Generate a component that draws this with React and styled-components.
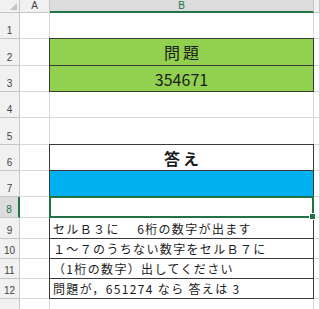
import { createGlobalStyle, styled, css } from "styled-components";

const GREEN = "#92d050";
const BLUE = "#00b0f0";
const EXCEL = "#217346";
const GRID = "#d9d9d9";
const INK = "#3a3a3a";

const GlobalStyle = createGlobalStyle`
  body {
    margin: 0;
    overflow: hidden;
    background: #fff;
    font-family: "Noto Sans CJK JP", "Noto Sans", sans-serif;
  }
`;

// row 13 is only partly in view, its number is hidden below the edge
const heights = [26, 27, 26, 26, 27, 26, 26, 21, 21, 20, 20, 20, 20];

const Sheet = styled.div`
  display: grid;
  grid-template-columns: 20px 30px 264px 1fr;
  grid-template-rows: 13px ${heights.map((h) => h + "px").join(" ")};
  width: 320px;
  height: 309px;
  overflow: hidden;
`;

const HeadBase = styled.div`
  box-sizing: border-box;
  background: ${(p) => (p.$selected ? "#dcdcdc" : "#f1f1f1")};
  color: ${(p) => (p.$selected ? EXCEL : "#444")};
  font-family: "Liberation Sans", Arial, sans-serif;
  font-size: 10px;
  display: flex;
  justify-content: center;
`;

const Corner = styled(HeadBase)`
  position: relative;
  border-right: 1px solid #c6c6c6;
  border-bottom: 1px solid #c6c6c6;

  &::after {
    content: "";
    position: absolute;
    right: 2px;
    bottom: 2px;
    border-left: 7px solid transparent;
    border-bottom: 7px solid #c3c3c3;
  }
`;

const ColHeader = styled(HeadBase)`
  align-items: center;
  border-right: 1px solid #c6c6c6;
  border-bottom: ${(p) => (p.$selected ? `2px solid ${EXCEL}` : "1px solid #c6c6c6")};
  line-height: 1;
`;

const RowHeader = styled(HeadBase)`
  align-items: flex-end;
  padding-bottom: 2px;
  border-bottom: 1px solid #c6c6c6;
  border-right: ${(p) => (p.$selected ? `2px solid ${EXCEL}` : "1px solid #c6c6c6")};
  line-height: 1;
`;

const Cell = styled.div`
  box-sizing: border-box;
  display: flex;
  align-items: center;
  min-width: 0;
  white-space: nowrap;
  overflow: hidden;
  color: #1b1b1b;
  background: ${(p) => p.$fill || "#fff"};
  border-right: 1px solid ${GRID};
  border-bottom: 1px solid ${GRID};

  ${(p) =>
    p.$boxed &&
    css`
      margin: -1px 0 0 -1px;
      border: 1px solid ${INK};
    `}

  ${(p) =>
    p.$title &&
    css`
      justify-content: center;
      font-size: 16px;
      letter-spacing: ${p.$spaced ? "3px" : "0"};
      padding-left: ${p.$spaced ? "3px" : "0"};
      font-weight: ${p.$bold ? 700 : 400};
    `}

  ${(p) =>
    p.$note &&
    css`
      padding-left: 3px;
      font-size: 12px;
      letter-spacing: 1.35px;
    `}

  ${(p) =>
    p.$active &&
    css`
      position: relative;
      z-index: 2;
      margin: -1px 0 0 -1px;
      border: 2px solid ${EXCEL};
      overflow: visible;

      &::after {
        content: "";
        position: absolute;
        right: -4px;
        bottom: -4px;
        width: 5px;
        height: 5px;
        background: ${EXCEL};
        border: 1px solid #fff;
      }
    `}
`;

const cellsB = {
  2: { text: "問題", $fill: GREEN, $boxed: true, $title: true, $spaced: true },
  3: { text: "354671", $fill: GREEN, $boxed: true, $title: true },
  6: { text: "答え", $boxed: true, $title: true, $spaced: true, $bold: true },
  7: { $fill: BLUE, $boxed: true },
  8: { $active: true },
  9: { text: "セルＢ３に　 6桁の数字が出ます", $boxed: true, $note: true },
  10: { text: "１～７のうちない数字をセルＢ７に", $boxed: true, $note: true },
  11: { text: "（1桁の数字）出してください", $boxed: true, $note: true },
  12: { text: "問題が，651274 なら 答えは 3", $boxed: true, $note: true },
};

export default function App() {
  return (
    <>
      <GlobalStyle />
      <Sheet>
        <Corner />
        <ColHeader>A</ColHeader>
        <ColHeader $selected>B</ColHeader>
        <ColHeader />
        {heights.map((_, i) => {
          const row = i + 1;
          const { text, ...b } = cellsB[row] || {};
          return [
            <RowHeader key={`h${row}`} $selected={row === 8}>
              {row < 13 ? row : null}
            </RowHeader>,
            <Cell key={`a${row}`} />,
            <Cell key={`b${row}`} {...b}>
              {text}
            </Cell>,
            <Cell key={`c${row}`} />,
          ];
        })}
      </Sheet>
    </>
  );
}
